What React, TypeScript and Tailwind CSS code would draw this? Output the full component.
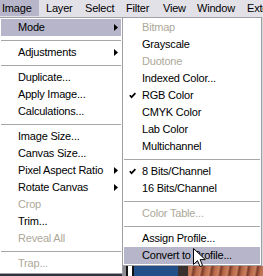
import * as React from "react";

type Item =
  | { kind: "sep" }
  | { kind: "item"; label: string; disabled?: boolean; sub?: boolean; checked?: boolean; active?: boolean };

const sep: Item = { kind: "sep" };
const it = (label: string, o: Partial<Omit<Extract<Item, { kind: "item" }>, "kind" | "label">> = {}): Item => ({
  kind: "item",
  label,
  ...o,
});

const imageMenu: Item[] = [
  it("Mode", { sub: true, active: true }),
  sep,
  it("Adjustments", { sub: true }),
  sep,
  it("Duplicate..."),
  it("Apply Image..."),
  it("Calculations..."),
  sep,
  it("Image Size..."),
  it("Canvas Size..."),
  it("Pixel Aspect Ratio", { sub: true }),
  it("Rotate Canvas", { sub: true }),
  it("Crop", { disabled: true }),
  it("Trim..."),
  it("Reveal All", { disabled: true }),
  sep,
  it("Trap...", { disabled: true }),
];

const modeMenu: Item[] = [
  it("Bitmap", { disabled: true }),
  it("Grayscale"),
  it("Duotone", { disabled: true }),
  it("Indexed Color..."),
  it("RGB Color", { checked: true }),
  it("CMYK Color"),
  it("Lab Color"),
  it("Multichannel"),
  sep,
  it("8 Bits/Channel", { checked: true }),
  it("16 Bits/Channel"),
  sep,
  it("Color Table...", { disabled: true }),
  sep,
  it("Assign Profile..."),
  it("Convert to Profile...", { active: true }),
];

function Arrow() {
  return (
    <svg width="4" height="7" viewBox="0 0 4 7" className="absolute right-[3px] top-[5px]">
      <polygon points="0,0 4,3.5 0,7" fill="#000" />
    </svg>
  );
}

function Check() {
  return (
    <svg width="7" height="7" viewBox="0 0 7 7" className="absolute left-[5px] top-[5px]">
      <polyline points="0.8,3.2 2.6,5.2 6.4,1.2" fill="none" stroke="#000" strokeWidth="1.7" />
    </svg>
  );
}

function MenuList({ items, textPad }: { items: Item[]; textPad: string }) {
  return (
    <>
      {items.map((m, i) =>
        m.kind === "sep" ? (
          <div key={i} className="flex h-[8px] items-center">
            <div className="h-px w-full bg-[#a6a5a9]" />
          </div>
        ) : (
          <div
            key={i}
            className={`relative flex h-[17px] items-center whitespace-nowrap ${textPad} ${
              m.active ? "bg-[#b6b5c9]" : ""
            } ${m.disabled ? "text-[#aca899]" : "text-black"}`}
          >
            {m.checked ? <Check /> : null}
            {m.label}
            {m.sub ? <Arrow /> : null}
          </div>
        ),
      )}
    </>
  );
}

function Cursor() {
  return (
    <svg width="13" height="20" viewBox="0 0 13 20" className="absolute left-[193px] top-[248px]">
      <path
        d="M0.5 0.5 L0.5 16.5 L4.5 12.6 L7.1 18.6 L9.6 17.5 L7.1 11.6 L12.3 11.6 Z"
        fill="#fff"
        stroke="#000"
        strokeWidth="1"
      />
    </svg>
  );
}

export default function App() {
  const bar = ["Layer", "Select", "Filter", "View", "Window", "Extensions"];
  const widths = ["w-[39px]", "w-[41px]", "w-[37px]", "w-[34px]", "w-[50px]", "w-[60px]"];
  return (
    <div className="relative h-[276px] w-[263px] overflow-hidden bg-[#d9d8de] font-['Liberation_Sans',Arial,sans-serif] text-[11px] leading-none tracking-[-0.2px] text-black">
      <div className="flex h-[17px] bg-[#e2e1e8]">
        <div className="flex h-[16px] w-[39px] shrink-0 items-center bg-[#b6b5c9] pl-[2px]">Image</div>
        <div className="ml-[7px] flex">
          {bar.map((b, i) => (
            <div key={b} className={`flex h-[16px] shrink-0 items-center ${widths[i]}`}>
              {b}
            </div>
          ))}
        </div>
      </div>

      <div className="flex h-[259px] flex-col justify-end">
        <div className="flex h-[10px]">
          <div className="w-[122px] bg-[#2f3440]" />
          <div className="w-[4px] bg-[#8c8c94]" />
          <div className="w-[8px] border-x-2 border-[#111] bg-white" />
          <div className="w-[44px] bg-[#24508a]" />
          <div className="w-[10px] bg-[#3a3030]" />
          <div className="flex-1 bg-[repeating-linear-gradient(100deg,#b8694a_0px,#c9805e_4px,#7a3b2a_6px,#b8694a_9px)]" />
        </div>
      </div>

      <div className="absolute left-[-1px] top-[17px] h-[257px] w-[124px] border border-[#a0a0a4] bg-white p-px">
        <MenuList items={imageMenu} textPad="pl-[17px]" />
      </div>

      <div className="absolute left-[122px] top-[17px] h-[249px] w-[140px] border border-[#a0a0a4] bg-white p-px">
        <MenuList items={modeMenu} textPad="pl-[18px]" />
      </div>

      <Cursor />
    </div>
  );
}
